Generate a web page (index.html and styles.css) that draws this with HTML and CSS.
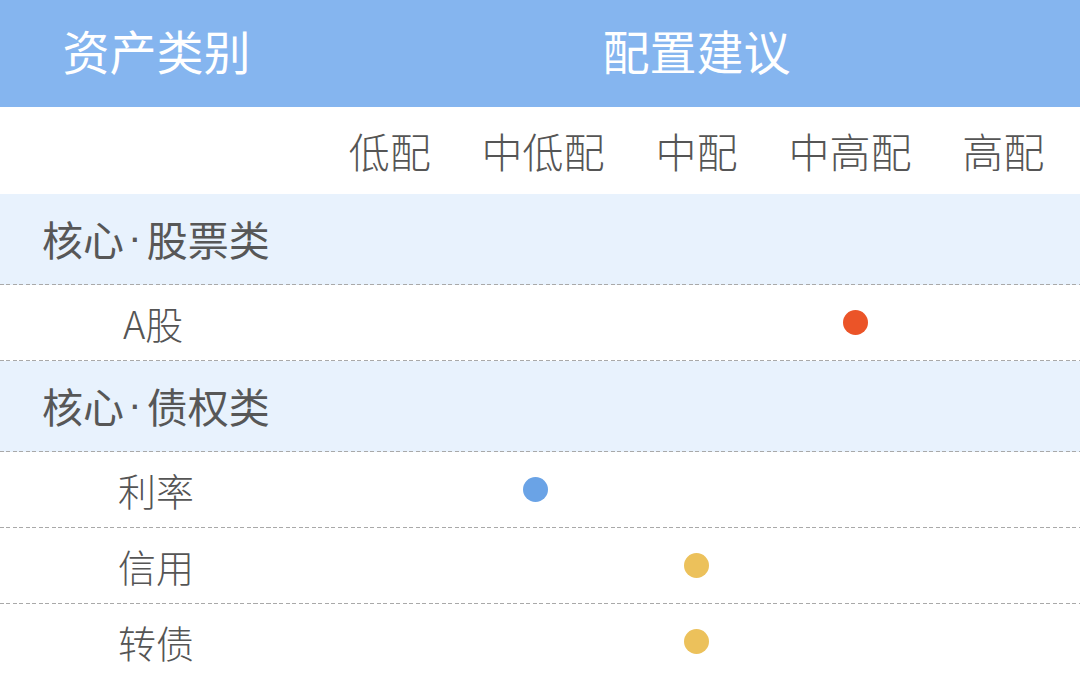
FILE: index.html
```html
<!DOCTYPE html>
<html lang="zh-CN">
<head>
<meta charset="utf-8">
<title>资产配置建议</title>
<link rel="stylesheet" href="styles.css">
</head>
<body>
<div class="table">
  <div class="row head">
    <div class="cell first">资产类别</div>
    <div class="cell span5">配置建议</div>
  </div>
  <div class="row sub">
    <div class="cell first"></div>
    <div class="cell">低配</div>
    <div class="cell">中低配</div>
    <div class="cell">中配</div>
    <div class="cell">中高配</div>
    <div class="cell">高配</div>
  </div>
  <div class="row cat">
    <div class="cell cat-name">核心<span class="sep">·</span>股票类</div>
  </div>
  <div class="row item">
    <div class="cell item-name a">A股</div>
    <div class="cell"></div>
    <div class="cell"></div>
    <div class="cell"></div>
    <div class="cell"><span class="dot red shift-r"></span></div>
    <div class="cell"></div>
  </div>
  <div class="row cat">
    <div class="cell cat-name">核心<span class="sep">·</span>债权类</div>
  </div>
  <div class="row item">
    <div class="cell item-name">利率</div>
    <div class="cell"></div>
    <div class="cell"><span class="dot blue shift-l"></span></div>
    <div class="cell"></div>
    <div class="cell"></div>
    <div class="cell"></div>
  </div>
  <div class="row item">
    <div class="cell item-name">信用</div>
    <div class="cell"></div>
    <div class="cell"></div>
    <div class="cell"><span class="dot yellow"></span></div>
    <div class="cell"></div>
    <div class="cell"></div>
  </div>
  <div class="row item last">
    <div class="cell item-name">转债</div>
    <div class="cell"></div>
    <div class="cell"></div>
    <div class="cell"><span class="dot yellow"></span></div>
    <div class="cell"></div>
    <div class="cell"></div>
  </div>
</div>
</body>
</html>
```

FILE: styles.css
```css
* { box-sizing: border-box; }
html, body {
  margin: 0;
  padding: 0;
  background: #ffffff;
}
body {
  width: 1080px;
  height: 677px;
  overflow: hidden;
  font-family: "Noto Sans CJK SC", "Noto Sans", sans-serif;
  color: #595959;
}
.table {
  display: flex;
  flex-direction: column;
}
.row {
  display: grid;
  grid-template-columns: 313px repeat(5, 1fr);
  align-items: center;
}
.cell {
  display: flex;
  align-items: center;
  justify-content: center;
  height: 100%;
  white-space: nowrap;
}
.head {
  height: 107px;
  background: #85b5ef;
  color: #ffffff;
  font-size: 47px;
}
.head .span5 {
  grid-column: 2 / span 5;
}
.head .cell {
  padding-bottom: 8px;
}
.sub {
  height: 87px;
  font-size: 41px;
  font-weight: 300;
  color: #555555;
}
.sub .cell {
  padding-bottom: 2px;
}
.cat {
  height: 91px;
  background-color: #e8f2fd;
  font-size: 41px;
  color: #575757;
}
.cat .cat-name {
  grid-column: 1 / span 6;
  justify-content: flex-start;
  padding-left: 42px;
  padding-bottom: 4px;
}
.sep {
  font-family: "Liberation Sans", sans-serif;
  margin: 0 5px 0 4px;
}
.item {
  height: 76px;
  font-size: 38px;
  font-weight: 300;
  color: #555555;
}
.cat, .item {
  background-image: repeating-linear-gradient(90deg, #a9a9a9 0 4px, transparent 4px 6.5px);
  background-size: 100% 1px;
  background-repeat: no-repeat;
  background-position: left bottom;
}
.item.last {
  background-image: none;
}
.item .item-name {
  justify-content: flex-start;
  padding-left: 118px;
  padding-bottom: 2px;
}
.item .item-name.a {
  padding-left: 123px;
}
.dot {
  display: block;
  width: 25px;
  height: 25px;
  border-radius: 50%;
  margin-bottom: 2px;
}
.shift-l { margin-right: 16px; }
.shift-r { margin-left: 12px; }
.red { background: #eb5428; }
.blue { background: #6aa3e6; }
.yellow { background: #ecc15b; }
```
